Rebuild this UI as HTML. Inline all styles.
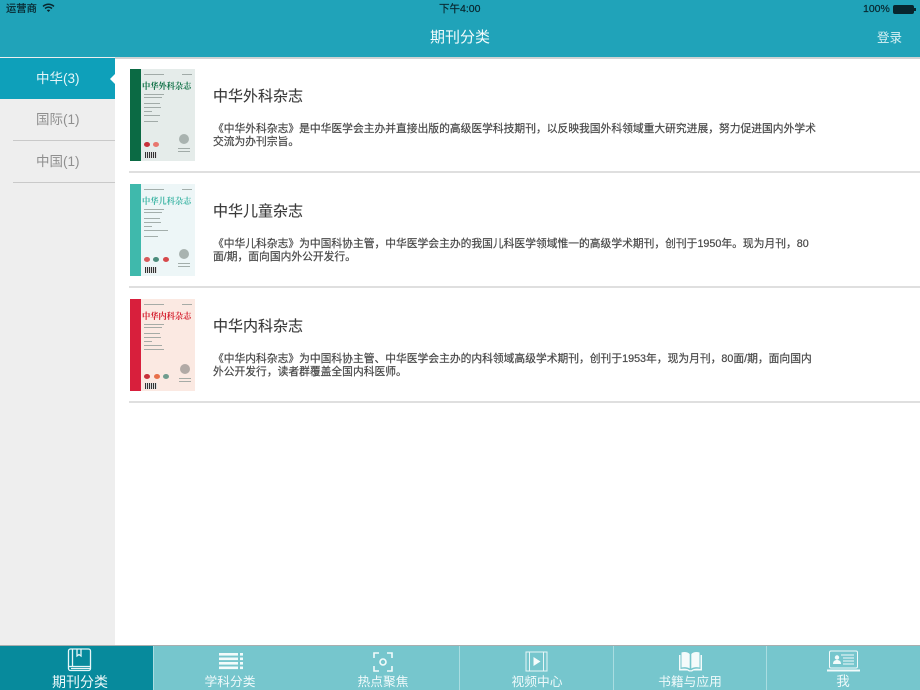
<!DOCTYPE html>
<html lang="zh"><head><meta charset="utf-8">
<style>
*{margin:0;padding:0;box-sizing:border-box}
html,body{width:920px;height:690px;overflow:hidden;background:#fff;font-family:"Liberation Sans","Noto Sans CJK SC",sans-serif}
.a{position:absolute;white-space:nowrap}
#nav{left:0;top:0;width:920px;height:57px;background:#20a3b9}
#side{left:0;top:57px;width:115px;height:588px;background:#eeeeee}
.sl{left:13px;width:102px;height:1px;background:#c9c9c9}
.st{left:36px;font-size:13.5px;line-height:20px;color:#8f8f8f}
.sep{left:129px;width:791px;height:2px;background:#dfdfdf}
.t{left:213px;font-size:15px;line-height:20px;color:#3a3a3a;-webkit-text-stroke:.1px #3a3a3a}
.d{left:213px;width:610px;font-size:10.77px;line-height:13px;color:#484848;font-weight:400;white-space:normal;-webkit-text-stroke:.2px #484848}
.sb{font-size:10.5px;line-height:13px;color:#08262e;-webkit-text-stroke:.2px #08262e}
.cover{left:130px;width:65px;height:92px;overflow:hidden}
.cover .sp{position:absolute;left:0;top:0;width:11px;height:92px}
.cover .n{position:absolute;left:12px;top:12px;font-size:8.3px;line-height:11px;font-weight:bold;font-family:"Noto Serif CJK SC","Noto Sans CJK SC",serif;letter-spacing:-.1px}
.cover .l{position:absolute;height:1px;background:#8a9692;opacity:.75}
.cover .c{position:absolute;border-radius:50%;width:6px;height:5px}
.tab{top:646px;height:44px;background:#76c6cd}
.tt{font-size:12.75px;line-height:14px;color:#eef9fa;text-align:center;top:675px}
.div{top:646px;width:1px;height:44px;background:#a9dde1}
</style></head><body>
<div class="a" id="nav"></div>
<div class="a" style="left:0;top:57px;width:920px;height:2px;background:#cfd3d4"></div>
<div class="a sb" style="left:6px;top:3px;font-size:10.3px">运营商</div>
<svg class="a" style="left:42px;top:3px" width="13" height="10" viewBox="0 0 13 10"><path d="M1 3.400C4.300.6 8.700.6 12 3.400M3 5.500c2.200-1.700 4.800-1.700 7 0" fill="none" stroke="#08262e" stroke-width="1.500"/><path d="M4.800 7.200c1.100-.8 2.300-.8 3.400 0L6.500 9z" fill="#08262e"/></svg>
<div class="a sb" style="left:439px;top:3px">下午4:00</div>
<div class="a sb" style="left:863px;top:3px">100%</div>
<div class="a" style="left:893px;top:5px;width:21px;height:9px;border:1px solid #08262e;border-radius:2px;background:#08262e"></div>
<div class="a" style="left:914px;top:8px;width:2px;height:3px;background:#08262e"></div>
<div class="a" style="left:430px;top:28px;font-size:15px;line-height:20px;color:#f2fbfc">期刊分类</div>
<div class="a" style="left:877px;top:29px;font-size:12.5px;line-height:18px;color:#d9f1f4">登录</div>

<div class="a" id="side"></div>
<div class="a" style="left:0;top:58px;width:115px;height:41px;background:#0ea0ba"></div>
<div class="a" style="left:110px;top:74px;width:0;height:0;border:5px solid transparent;border-left:0;border-right:5px solid #fff"></div>
<div class="a st" style="top:69px;color:#e4f5f8">中华(3)</div>
<div class="a st" style="top:110px">国际(1)</div>
<div class="a sl" style="top:140px"></div>
<div class="a st" style="top:152px">中国(1)</div>
<div class="a sl" style="top:182px"></div>

<div class="a cover" style="top:69px;background:#e5ecea">
<div class="sp" style="background:#0b6a44"></div>
<div class="n" style="color:#0e7045">中华外科杂志</div>
<div class="l" style="left:14px;top:5px;width:20px"></div><div class="l" style="left:52px;top:5px;width:10px"></div>
<div class="l" style="left:14px;top:25px;width:20px"></div><div class="l" style="left:14px;top:28px;width:18px"></div>
<div class="l" style="left:14px;top:34px;width:16px"></div><div class="l" style="left:14px;top:38px;width:17px"></div>
<div class="l" style="left:14px;top:42px;width:8px"></div><div class="l" style="left:14px;top:46px;width:16px"></div>
<div class="l" style="left:14px;top:52px;width:14px"></div>
<div class="c" style="left:14px;top:73px;background:#c8303a"></div><div class="c" style="left:23px;top:73px;background:#e8766e"></div>
<div class="a" style="left:15px;top:83px;width:12px;height:6px;background:repeating-linear-gradient(90deg,#333 0 1px,#ddd 1px 2px)"></div>
<div class="a" style="left:49px;top:65px;width:10px;height:10px;border-radius:50%;background:#a9b3b0"></div>
<div class="l" style="left:48px;top:79px;width:12px"></div><div class="l" style="left:48px;top:82px;width:12px"></div>
</div>

<div class="a cover" style="top:184px;background:#edf6f7">
<div class="sp" style="background:#3fb9ac"></div>
<div class="n" style="color:#3fb6a6">中华儿科杂志</div>
<div class="l" style="left:14px;top:5px;width:20px"></div><div class="l" style="left:52px;top:5px;width:10px"></div>
<div class="l" style="left:14px;top:25px;width:20px"></div><div class="l" style="left:14px;top:28px;width:18px"></div>
<div class="l" style="left:14px;top:34px;width:16px"></div><div class="l" style="left:14px;top:38px;width:17px"></div>
<div class="l" style="left:14px;top:42px;width:8px"></div><div class="l" style="left:14px;top:46px;width:24px"></div>
<div class="l" style="left:14px;top:52px;width:14px"></div>
<div class="c" style="left:14px;top:73px;background:#d65a5a"></div><div class="c" style="left:23px;top:73px;background:#4b8c7c"></div><div class="c" style="left:33px;top:73px;background:#d6484a"></div>
<div class="a" style="left:15px;top:83px;width:12px;height:6px;background:repeating-linear-gradient(90deg,#333 0 1px,#ddd 1px 2px)"></div>
<div class="a" style="left:49px;top:65px;width:10px;height:10px;border-radius:50%;background:#a9b3b0"></div>
<div class="l" style="left:48px;top:79px;width:12px"></div><div class="l" style="left:48px;top:82px;width:12px"></div>
</div>

<div class="a cover" style="top:299px;background:#fbe9e2">
<div class="sp" style="background:#d81f3c"></div>
<div class="n" style="color:#d4202f">中华内科杂志</div>
<div class="l" style="left:14px;top:5px;width:20px"></div><div class="l" style="left:52px;top:5px;width:10px"></div>
<div class="l" style="left:14px;top:25px;width:20px"></div><div class="l" style="left:14px;top:28px;width:18px"></div>
<div class="l" style="left:14px;top:34px;width:16px"></div><div class="l" style="left:14px;top:38px;width:17px"></div>
<div class="l" style="left:14px;top:42px;width:8px"></div><div class="l" style="left:14px;top:46px;width:18px"></div>
<div class="l" style="left:14px;top:50px;width:20px"></div>
<div class="c" style="left:14px;top:75px;background:#c8303a"></div><div class="c" style="left:24px;top:75px;background:#e8704a"></div><div class="c" style="left:33px;top:75px;background:#6f9c8e"></div>
<div class="a" style="left:15px;top:84px;width:12px;height:6px;background:repeating-linear-gradient(90deg,#333 0 1px,#ddd 1px 2px)"></div>
<div class="a" style="left:50px;top:65px;width:10px;height:10px;border-radius:50%;background:#b2aaa6"></div>
<div class="l" style="left:49px;top:79px;width:12px"></div><div class="l" style="left:49px;top:82px;width:12px"></div>
</div>

<div class="a t" style="top:87px">中华外科杂志</div>
<div class="a d" style="top:123px">《中华外科杂志》是中华医学会主办并直接出版的高级医学科技期刊，以反映我国外科领域重大研究进展，努力促进国内外学术<br>交流为办刊宗旨。</div>
<div class="a sep" style="top:171px"></div>
<div class="a t" style="top:202px">中华儿童杂志</div>
<div class="a d" style="top:238px">《中华儿科杂志》为中国科协主管，中华医学会主办的我国儿科医学领域惟一的高级学术期刊，创刊于1950年。现为月刊，80<br>面/期，面向国内外公开发行。</div>
<div class="a sep" style="top:286px"></div>
<div class="a t" style="top:317px">中华内科杂志</div>
<div class="a d" style="top:353px">《中华内科杂志》为中国科协主管、中华医学会主办的内科领域高级学术期刊，创刊于1953年，现为月刊，80面/期，面向国内<br>外公开发行，读者群覆盖全国内科医师。</div>
<div class="a sep" style="top:401px"></div>

<div class="a" style="left:0;top:645px;width:920px;height:1px;background:#a9aeaf"></div>
<div class="a tab" style="left:0;width:920px"></div>
<div class="a tab" style="left:0;width:153px;background:#078a9c"></div>
<div class="a div" style="left:153px"></div>
<div class="a div" style="left:459px"></div>
<div class="a div" style="left:613px"></div>
<div class="a div" style="left:766px"></div>

<svg class="a" style="left:67px;top:648px" width="25" height="24" viewBox="0 0 25 24" fill="none" stroke="#e6f6f7" stroke-width="1.300"><rect x="1.500" y="1" width="22" height="21.500" rx="2"/><path d="M5.500 1v17M1.500 18.500h22M4 20.500h19"/><path d="M10 1v7l2-1.500L14 8V1"/></svg>
<div class="a tt" style="left:40px;width:80px;top:675px;font-size:14px;line-height:15px">期刊分类</div>

<svg class="a" style="left:218px;top:652px" width="26" height="19" viewBox="0 0 26 19" fill="#f2fbfb"><rect x="1" y="1" width="19" height="2.600"/><rect x="22" y="1" width="3" height="2.600"/><rect x="1" y="5.500" width="19" height="2.600"/><rect x="22" y="5.500" width="3" height="2.600"/><rect x="1" y="10" width="19" height="2.600"/><rect x="22" y="10" width="3" height="2.600"/><rect x="1" y="14.500" width="19" height="2.600"/><rect x="22" y="14.500" width="3" height="2.600"/></svg>
<div class="a tt" style="left:190px;width:80px">学科分类</div>

<svg class="a" style="left:372px;top:652px" width="22" height="20" viewBox="0 0 22 20" fill="none" stroke="#f2fbfb" stroke-width="1.600"><path d="M7 1H2v5M15 1h5v5M7 19H2v-5M15 19h5v-5"/><circle cx="11" cy="10" r="3"/></svg>
<div class="a tt" style="left:343px;width:80px">热点聚焦</div>

<svg class="a" style="left:525px;top:651px" width="23" height="21" viewBox="0 0 23 21" fill="none" stroke="#e6f6f7" stroke-width="1"><rect x="1" y="1" width="21" height="19"/><path d="M4.500 1v19M18.500 1v19"/><path d="M8.500 6l7 4.500-7 4.500z" fill="#f6fcfc" stroke="none"/></svg>
<div class="a tt" style="left:497px;width:80px">视频中心</div>

<svg class="a" style="left:678px;top:651px" width="25" height="21" viewBox="0 0 25 21" fill="#f4fbfb"><path d="M3.500 1.500C6.500.5 10 1 11.700 3v14.500C9.500 16 6.500 15.700 3.500 16.500z"/><path d="M21.500 1.500C18.500.5 15 1 13.300 3v14.500c2.200-1.500 5.200-1.800 8.200-1z"/><path d="M1 4h1.500v14c3.500-.8 7-.5 9 1.200h2c2-1.700 5.500-2 9-1.200V4H24v15.500h-8.500l-1.500 1h-3l-1.500-1H1z"/></svg>
<div class="a tt" style="left:622px;width:136px">书籍与应用</div>

<svg class="a" style="left:826px;top:650px" width="35" height="22" viewBox="0 0 35 22" fill="none" stroke="#f2fbfb" stroke-width="1"><rect x="3.500" y="1" width="28" height="17" rx="1.500"/><path d="M1 20.500h33" stroke-width="2"/><circle cx="11" cy="7.500" r="2.200" fill="#f2fbfb" stroke="none"/><path d="M7 14c0-3 1.800-4 4-4s4 1 4 4z" fill="#f2fbfb" stroke="none"/><path d="M15 5h13M17 8h11M17 11h11M17 14h11"/></svg>
<div class="a tt" style="left:803px;width:80px;font-size:13.500px">我</div>
</body></html>
